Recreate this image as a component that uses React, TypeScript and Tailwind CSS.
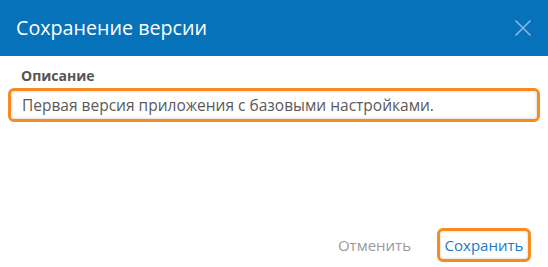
import React, { useState } from "react";

export default function App() {
  const [description, setDescription] = useState("Первая версия приложения с базовыми настройками.");

  return (
    <div className="flex h-[267px] w-[548px] flex-col bg-white font-['Open_Sans',sans-serif]">
      <header className="flex h-[56px] items-center justify-between bg-[#0672ba] pl-4 pr-[16px]">
        <h1 className="text-[19.7px] font-normal text-white">Сохранение версии</h1>
        <button type="button" className="flex h-[18px] w-[18px] items-center justify-center">
          <svg width="18" height="18" viewBox="0 0 18 18" fill="none">
            <path d="M1.5 1.5L16.5 16.5M16.5 1.5L1.5 16.5" stroke="#86b8e2" strokeWidth="1.6" />
          </svg>
        </button>
      </header>

      <main className="flex-1 px-2 pt-[10px]">
        <label className="block pl-[13px] text-[14px] font-bold leading-[19px] text-[#555]">Описание</label>
        <div className="mt-[3px] rounded-[6px] border-[3px] border-[#f68b1f]">
          <input
            value={description}
            onChange={(event) => setDescription(event.target.value)}
            className="h-[28px] w-full rounded-[3px] bg-white px-[11px] text-[15.5px] text-[#5a5a5a] shadow-[inset_0_0_3px_rgba(0,0,0,0.25)] outline-none"
          />
        </div>
      </main>

      <footer className="flex items-center justify-end gap-[26px] pb-[5px] pr-[17px]">
        <button type="button" className="text-[15px] text-[#9a9a9a]">
          Отменить
        </button>
        <button
          type="button"
          className="h-[34px] w-[94px] rounded-[6px] border-[3px] border-[#f68b1f] text-[15px] text-[#1a7bc4] shadow-[inset_0_0_3px_rgba(0,0,0,0.2)]"
        >
          Сохранить
        </button>
      </footer>
    </div>
  );
}
